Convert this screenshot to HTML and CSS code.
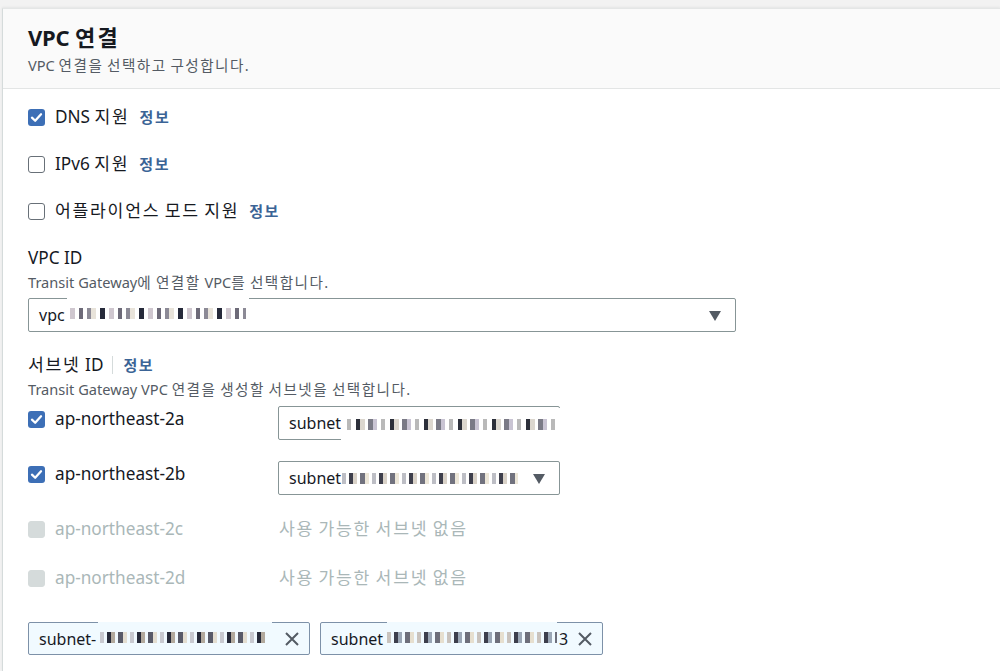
FILE: index.html
```html
<!DOCTYPE html>
<html lang="ko">
<head>
<meta charset="utf-8">
<title>VPC 연결</title>
<link rel="stylesheet" href="styles.css">
</head>
<body>
<div class="page">
  <section class="panel">
    <header class="panel-head">
      <h2 class="title">VPC <span class="ko">연결</span></h2>
      <p class="subtitle">VPC <span class="ko">연결을 선택하고 구성합니다.</span></p>
    </header>
    <div class="panel-body">
      <div class="check-row">
        <span class="cb checked"><svg viewBox="0 0 18 18"><path d="M4.2 9.2 7.6 12.4 13.8 5.6" fill="none" stroke="#fff" stroke-width="2.4" stroke-linecap="round" stroke-linejoin="round"/></svg></span>
        <span class="cb-label">DNS <span class="ko">지원</span></span>
        <a class="info ko">정보</a>
      </div>
      <div class="check-row">
        <span class="cb"></span>
        <span class="cb-label">IPv6 <span class="ko">지원</span></span>
        <a class="info ko">정보</a>
      </div>
      <div class="check-row">
        <span class="cb"></span>
        <span class="cb-label ko">어플라이언스 모드 지원</span>
        <a class="info ko">정보</a>
      </div>

      <div class="field vpc-field">
        <div class="field-label">VPC ID</div>
        <div class="field-desc">Transit Gateway<span class="ko">에 연결할</span> VPC<span class="ko">를 선택합니다.</span></div>
        <div class="select select-wide">
          <span class="select-text">vpc</span>
          <span class="patch patch-vpc"><span class="pix pix-a"></span></span>
          <span class="caret"></span>
        </div>
      </div>

      <div class="field subnet-field">
        <div class="field-label"><span class="ko">서브넷</span>&nbsp;ID<span class="sep"></span><a class="info ko">정보</a></div>
        <div class="field-desc">Transit Gateway VPC <span class="ko">연결을 생성할 서브넷을 선택합니다.</span></div>

        <div class="az-list">
          <div class="az-row">
            <div class="az-name">
              <span class="cb checked"><svg viewBox="0 0 18 18"><path d="M4.2 9.2 7.6 12.4 13.8 5.6" fill="none" stroke="#fff" stroke-width="2.4" stroke-linecap="round" stroke-linejoin="round"/></svg></span>
              <span class="az-text">ap-northeast-2a</span>
            </div>
            <div class="select select-subnet">
              <span class="select-text">subnet</span>
              <span class="patch patch-2a"><span class="pix pix-b"></span></span>
            </div>
          </div>
          <div class="az-row">
            <div class="az-name">
              <span class="cb checked"><svg viewBox="0 0 18 18"><path d="M4.2 9.2 7.6 12.4 13.8 5.6" fill="none" stroke="#fff" stroke-width="2.4" stroke-linecap="round" stroke-linejoin="round"/></svg></span>
              <span class="az-text">ap-northeast-2b</span>
            </div>
            <div class="select select-subnet">
              <span class="select-text">subnet</span><span class="pix pix-c"></span>
              <span class="caret"></span>
            </div>
          </div>
          <div class="az-row disabled">
            <div class="az-name">
              <span class="cb dis"></span>
              <span class="az-text">ap-northeast-2c</span>
            </div>
            <div class="none-text ko">사용 가능한 서브넷 없음</div>
          </div>
          <div class="az-row disabled">
            <div class="az-name">
              <span class="cb dis"></span>
              <span class="az-text">ap-northeast-2d</span>
            </div>
            <div class="none-text ko">사용 가능한 서브넷 없음</div>
          </div>
        </div>

        <div class="tokens">
          <div class="token">
            <span class="token-text">subnet-</span>
            <span class="patch patch-t1"><span class="pix pix-d"></span></span>
            <svg class="token-x" viewBox="0 0 16 16"><path d="M2 2 14 14M14 2 2 14" stroke="#545b64" stroke-width="2" fill="none"/></svg>
          </div>
          <div class="token">
            <span class="token-text">subnet</span>
            <span class="patch patch-t2"><span class="pix pix-e"></span></span>
            <span class="token-text tail">3</span>
            <svg class="token-x" viewBox="0 0 16 16"><path d="M2 2 14 14M14 2 2 14" stroke="#545b64" stroke-width="2" fill="none"/></svg>
          </div>
        </div>
      </div>
    </div>
  </section>
</div>
</body>
</html>
```

FILE: styles.css
```css
* { box-sizing: border-box; }
html, body { margin: 0; padding: 0; }
body {
  background: #f2f2f2;
  font-family: "Noto Sans", "Noto Sans CJK KR", sans-serif;
  color: #16191f;
  width: 1000px;
  height: 671px;
  overflow: hidden;
}
.ko {
  letter-spacing: 0.1em;
  word-spacing: -0.1em;
}
.page {
  padding: 8px 0 0 2px;
}
.panel {
  background: #fff;
  border-left: 1px solid #d5dbdb;
  border-top: 1px solid #e4e6e6;
  box-shadow: 0 -1px 2px rgba(0, 28, 36, 0.06);
  height: 663px;
  overflow: hidden;
}
.panel-head {
  background: #fafafa;
  border-bottom: 1px solid #e3e5e5;
  height: 80px;
  padding: 13px 25px 0;
}
.title {
  margin: 0;
  font-size: 22px;
  font-weight: 700;
  line-height: 30px;
  letter-spacing: -0.2px;
}
.title .ko { letter-spacing: 0.1em; }
.subtitle {
  margin: 3px 0 0;
  font-size: 14.6px;
  line-height: 20px;
  color: #545b64;
}
.panel-body {
  padding: 16px 25px 0;
}
.check-row {
  display: flex;
  align-items: center;
  height: 24px;
  margin-bottom: 23px;
}
.check-row:nth-child(3) { margin-bottom: 0; }
.cb {
  width: 17px;
  height: 17px;
  border: 1.5px solid #687078;
  border-radius: 3px;
  background: #fff;
  flex: none;
  display: inline-flex;
}
.cb svg { width: 100%; height: 100%; }
.cb.checked {
  border-width: 0;
  background: #3d6fb6;
}
.cb.dis {
  background: #d5dbdb;
  border-color: #d5dbdb;
}
.cb-label {
  margin-left: 10px;
  font-size: 17.2px;
  line-height: 24px;
}
.info {
  margin-left: 10px;
  font-size: 15px;
  font-weight: 700;
  color: #3b6496;
  line-height: 20px;
}
.field-label {
  font-size: 17.2px;
  line-height: 24px;
  display: flex;
  align-items: center;
}
.field-label .info { margin-left: 10px; }
.sep {
  width: 1px;
  height: 18px;
  background: #d5dbdb;
  margin-left: 9px;
}
.field-desc {
  font-size: 14.6px;
  line-height: 20px;
  color: #545b64;
  margin-top: 2px;
}
.vpc-field { margin-top: 23px; }
.subnet-field { margin-top: 21px; }
.select {
  position: relative;
  height: 34px;
  border: 1px solid #879596;
  border-radius: 2px;
  background: #fff;
  display: flex;
  align-items: center;
  padding: 0 10px;
}
.select-wide { width: 708px; margin-top: 6px; }
.select-subnet { width: 282px; }
.select-text {
  font-size: 16px;
  line-height: 22px;
}
.caret {
  position: absolute;
  right: 14px;
  top: 12px;
  width: 0;
  height: 0;
  border-left: 6.5px solid transparent;
  border-right: 6.5px solid transparent;
  border-top: 10px solid #545b64;
}
.patch {
  position: absolute;
  background: #fff;
  display: flex;
  align-items: center;
}
.patch-vpc { left: 38px; width: 182px; top: -1px; bottom: 2px; }
.patch-2a { left: 62px; right: -3px; top: 1px; bottom: -2px; }
.pix {
  display: block;
  height: 11px;
}
.pix-a {
  width: 176px;
  margin-left: 3px;
  background:
    repeating-linear-gradient(90deg, #cfc7cf 0 5px, #fff 5px 9px, #6d6a78 9px 13px, #fff 13px 17px, #8c8a96 17px 21px, #e8e3da 21px 26px, #fff 26px 30px, #262a3a 30px 35px, #fff 35px 39px);
}
.pix-b {
  width: 208px;
  margin-left: 6px;
  background:
    repeating-linear-gradient(90deg, #b9b9b9 0 4px, #fff 4px 9px, #2c2f3a 9px 13px, #dcd7cf 13px 18px, #fff 18px 21px, #7a7a86 21px 26px, #c9c4d3 26px 30px, #fff 30px 34px);
}
.pix-c {
  width: 176px;
  margin-left: 1px;
  background:
    repeating-linear-gradient(90deg, #bdbec5 0 4px, #fff 4px 7px, #3d3e4b 7px 11px, #d9d2c8 11px 15px, #fff 15px 18px, #71727e 18px 23px, #ece6d8 23px 27px, #fff 27px 30px);
}
.az-list {
  margin-top: 7px;
  display: flex;
  flex-direction: column;
  gap: 21px;
}
.az-row {
  display: flex;
  align-items: flex-start;
}
.az-name {
  width: 250px;
  height: 26px;
  display: flex;
  align-items: center;
  flex: none;
}
.az-text {
  margin-left: 10px;
  font-size: 17.2px;
  line-height: 26px;
}
.az-row.disabled { height: 28px; }
.az-row.disabled .az-text { color: #aab7b8; }
.none-text {
  font-size: 17.2px;
  line-height: 26px;
  color: #aab7b8;
  margin-left: 1px;
}
.tokens {
  display: flex;
  gap: 10px;
  margin-top: 29px;
}
.token {
  position: relative;
  width: 282px;
  height: 33px;
  border: 1px solid #7d91a8;
  border-radius: 2px;
  background: #f1faff;
  display: flex;
  align-items: center;
  padding: 0 10px;
}
.token + .token { width: 283px; }
.token-text {
  font-size: 16px;
  line-height: 22px;
}
.token-text.tail {
  position: absolute;
  left: 238px;
}
.token-x {
  position: absolute;
  right: 9px;
  top: 8px;
  width: 16px;
  height: 16px;
}
.patch-t1 { left: 69px; width: 174px; top: -1px; bottom: 2px; background: #f1faff; }
.patch-t2 { left: 66px; width: 170px; top: -1px; bottom: 2px; background: #f1faff; }
.pix-d {
  width: 168px;
  margin-left: 2px;
  background:
    repeating-linear-gradient(90deg, #c8c9d0 0 4px, #f1faff 4px 7px, #272b3b 7px 11px, #b2a99d 11px 15px, #f1faff 15px 18px, #585a68 18px 23px, #e3ddd0 23px 27px, #f1faff 27px 30px);
}
.pix-e {
  width: 170px;
  margin-left: 0;
  background:
    repeating-linear-gradient(90deg, #c9c3bd 0 4px, #f1faff 4px 7px, #3c3e4c 7px 11px, #9aa6b5 11px 15px, #f1faff 15px 18px, #6d6e7a 18px 23px, #e6dfcf 23px 27px, #f1faff 27px 30px);
}
```
